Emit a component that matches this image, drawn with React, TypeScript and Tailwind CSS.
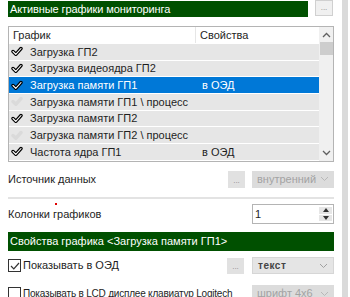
import React from 'react';

type Row = { name: string; checked: boolean; prop?: string; selected?: boolean };

const ROWS: Row[] = [
  { name: 'Загрузка ГП2', checked: true },
  { name: 'Загрузка видеоядра ГП2', checked: true },
  { name: 'Загрузка памяти ГП1', checked: true, prop: 'в ОЭД', selected: true },
  { name: 'Загрузка памяти ГП1 \\ процесс', checked: false },
  { name: 'Загрузка памяти ГП2', checked: true },
  { name: 'Загрузка памяти ГП2 \\ процесс', checked: false },
  { name: 'Частота ядра ГП1', checked: true, prop: 'в ОЭД' },
  { name: '', checked: false },
];

const Check = ({ on }: { on: boolean }) => (
  <svg width="12" height="11" viewBox="0 0 12 11" className="shrink-0">
    <path d="M2 5.5 L4.8 8.3 L10 2.5" fill="none" stroke={on ? '#000000' : '#dadada'} strokeWidth="3.4" strokeLinecap="round" strokeLinejoin="round" />
    {on && <path d="M2 5.5 L4.8 8.3 L10 2.5" fill="none" stroke="#ffffff" strokeWidth="1.1" strokeLinecap="round" strokeLinejoin="round" />}
  </svg>
);

const Chevron = ({ color = '#a0a0a0' }: { color?: string }) => (
  <svg width="9" height="6" viewBox="0 0 9 6">
    <path d="M1 1 L4.5 4.5 L8 1" fill="none" stroke={color} strokeWidth="1" />
  </svg>
);

const Dots = ({ className }: { className: string }) => (
  <div className={`flex items-end justify-center pb-[3px] text-[8px] leading-none text-[#8a8a8a] ${className}`}>...</div>
);

const App: React.FC = () => {
  return (
    <div className="flex w-[350px] h-[297px] overflow-hidden bg-white text-[11px] text-[#1e1e1e] whitespace-nowrap" style={{ fontFamily: '"Liberation Sans", Arial, sans-serif' }}>
      <div className="w-[342px] shrink-0 pl-2 pr-[8px] flex flex-col">
        {/* header */}
        <div className="flex items-start h-[26px] shrink-0">
          <div className="mt-[1px] h-[16px] w-[300px] bg-[#005000] text-white pl-[2px] leading-[16px] tracking-[-0.1px]">Активные графики мониторинга</div>
          <Dots className="ml-[7px] h-[16px] w-[18px] bg-[#f0f0f0] border border-[#d0d0d0]" />
        </div>

        {/* table */}
        <div className="h-[136px] shrink-0 border border-[#b4b4b4] flex overflow-hidden">
          <div className="flex-1 flex flex-col overflow-hidden">
            <div className="h-[16px] shrink-0 flex bg-white leading-[16px]">
              <div className="w-[187px] pl-[4px] border-r border-[#e6e6e6]">График</div>
              <div className="pl-[4px]">Свойства</div>
            </div>
            {ROWS.map((r, i) => (
              <div key={i} className={`h-[16.7px] shrink-0 border-t border-white flex items-center ${r.selected ? 'bg-[#0078d7] text-white' : 'bg-[#e6e6e6]'}`}>
                <div className="w-[188px] flex items-center pl-[2px] gap-[7px]">
                  <Check on={r.checked} />
                  <span>{r.name}</span>
                </div>
                <div className="pl-[5px]">{r.prop}</div>
              </div>
            ))}
          </div>
          <div className="w-[14px] shrink-0 bg-[#f0f0f0] flex flex-col items-center">
            <svg width="9" height="6" viewBox="0 0 9 6" className="mt-[5px]">
              <path d="M1 5 L4.5 1.5 L8 5" fill="none" stroke="#606060" strokeWidth="1.3" />
            </svg>
            <div className="mt-[4px] w-[13px] h-[13px] bg-[#cdcdcd]" />
            <div className="flex-1" />
            <svg width="9" height="6" viewBox="0 0 9 6" className="mb-[5px]">
              <path d="M1 1 L4.5 4.5 L8 1" fill="none" stroke="#606060" strokeWidth="1.3" />
            </svg>
          </div>
        </div>

        {/* source */}
        <div className="mt-[8px] flex items-center h-[18px] shrink-0">
          <span className="flex-1">Источник данных</span>
          <Dots className="h-[17px] w-[17px] bg-[#e1e1e1]" />
          <div className="ml-[7px] h-[17px] w-[82px] bg-[#dcdcdc] flex items-center justify-between pl-[5px] pr-[5px] text-[#a3a3a3]">
            <span>внутренний</span>
            <Chevron color="#b8b8b8" />
          </div>
        </div>
        <div className="mt-[9px] h-[2px] shrink-0 bg-[#e3e3e3]" />

        {/* columns */}
        <div className="mt-[5px] flex items-center h-[20px] shrink-0 relative">
          <span className="absolute left-[47px] -top-[1px] w-[2px] h-[2px] bg-[#e00000]" />
          <span className="flex-1">Колонки графиков</span>
          <div className="h-[20px] w-[82px] border border-[#b4b4b4] bg-white flex">
            <span className="flex-1 pl-[2px] leading-[18px]">1</span>
            <div className="w-[13px] my-[2px] mr-[1px] flex flex-col gap-[1px]">
              <div className="flex-1 bg-[#e6e6e6] flex items-center justify-center">
                <svg width="6" height="4" viewBox="0 0 6 4"><path d="M0 4 L3 0 L6 4 Z" fill="#333" /></svg>
              </div>
              <div className="flex-1 bg-[#e6e6e6] flex items-center justify-center">
                <svg width="6" height="4" viewBox="0 0 6 4"><path d="M0 0 L3 4 L6 0 Z" fill="#333" /></svg>
              </div>
            </div>
          </div>
        </div>

        {/* properties header */}
        <div className="mt-[8px] h-[19px] shrink-0 bg-[#005000] text-white pl-[2px] leading-[19px]">Свойства графика &lt;Загрузка памяти ГП1&gt;</div>

        {/* show in OED */}
        <div className="mt-[6px] flex items-center h-[17px] shrink-0">
          <div className="w-[13px] h-[13px] border border-[#333] bg-white flex items-center justify-center">
            <svg width="10" height="8" viewBox="0 0 10 8"><path d="M1 4 L3.8 6.8 L9 1" fill="none" stroke="#333" strokeWidth="1.2" /></svg>
          </div>
          <span className="ml-[2px] flex-1">Показывать в ОЭД</span>
          <Dots className="h-[16px] w-[17px] bg-[#e1e1e1]" />
          <div className="ml-[8px] h-[17px] w-[82px] bg-[#e5e5e5] border border-[#d6d6d6] flex items-center justify-between pl-[5px] pr-[5px] text-[#444] font-semibold text-[10px] tracking-[0.5px]">
            <span>текст</span>
            <Chevron />
          </div>
        </div>

        {/* LCD */}
        <div className="mt-[11px] flex items-center h-[17px] shrink-0">
          <div className="w-[13px] h-[13px] border border-[#333] bg-white" />
          <span className="ml-[2px] flex-1 text-[10px] tracking-[-0.2px]">Показывать в LCD дисплее клавиатур Logitech</span>
          <div className="h-[17px] w-[82px] bg-[#dcdcdc] flex items-center justify-between pl-[5px] pr-[5px] text-[#a3a3a3]">
            <span>шрифт 4x6</span>
            <Chevron color="#b8b8b8" />
          </div>
        </div>
      </div>
      <div className="w-[6px] shrink-0 bg-[#dadada]" />
    </div>
  );
};

export default App;
